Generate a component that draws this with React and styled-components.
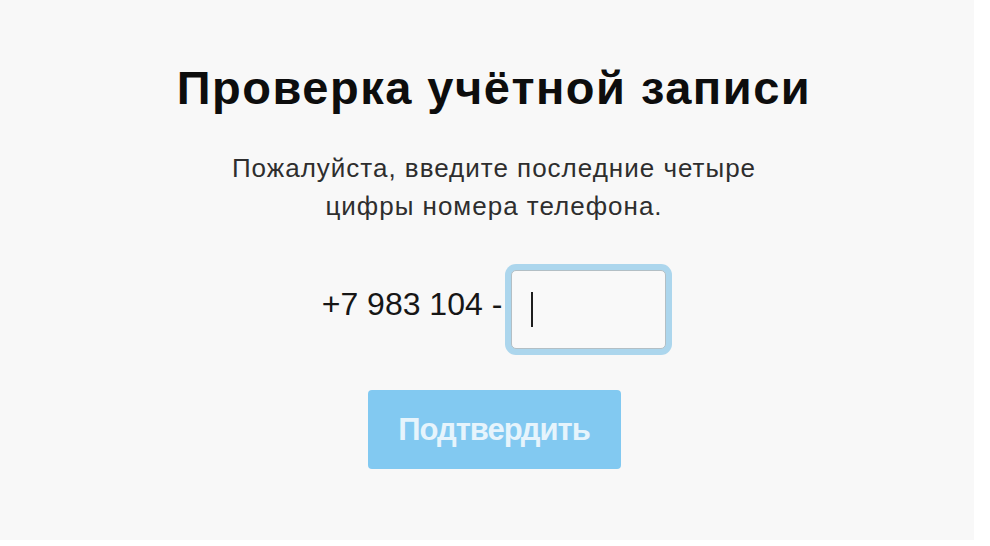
import styled, { createGlobalStyle } from "styled-components";

const GlobalStyle = createGlobalStyle`
  html, body {
    margin: 0;
    padding: 0;
    background: #ffffff;
  }
  body {
    font-family: "Liberation Sans", Arial, sans-serif;
  }
`;

const App = () => {
  return (
    <>
      <GlobalStyle />
      <Page>
        <Card>
          <Title>Проверка учётной записи</Title>
          <Description>
            Пожалуйста, введите последние четыре
            <br />
            цифры номера телефона.
          </Description>
          <PhoneRow>
            <Prefix>+7 983 104 -</Prefix>
            <CodeInput>
              <Caret />
            </CodeInput>
          </PhoneRow>
          <Submit disabled>Подтвердить</Submit>
        </Card>
      </Page>
    </>
  );
};

const Page = styled.div`
  width: 990px;
  height: 546px;
  box-sizing: border-box;
  padding: 0 16px 6px 0;
  background: #ffffff;
`;

const Card = styled.div`
  height: 100%;
  background: #f8f8f8;
  display: flex;
  flex-direction: column;
  align-items: center;
  padding: 60px 0 0 14px;
  box-sizing: border-box;
`;

const Title = styled.h1`
  margin: 0;
  font-size: 47px;
  font-weight: bold;
  letter-spacing: 1.5px;
  color: #0d0d0d;
  line-height: 56px;
`;

const Description = styled.p`
  margin: 33px 0 0;
  font-size: 26px;
  letter-spacing: 1px;
  line-height: 38px;
  color: #2e2e2e;
  text-align: center;
`;

const PhoneRow = styled.div`
  display: flex;
  align-items: center;
  gap: 9px;
  margin-top: 45px;
`;

const Prefix = styled.span`
  font-size: 32px;
  color: #161616;
  margin-bottom: 10px;
`;

const CodeInput = styled.div`
  width: 155px;
  height: 79px;
  box-sizing: border-box;
  border: 1px solid #b3bfc5;
  border-radius: 5px;
  background: #f9f9f9;
  box-shadow: 0 0 0 6px #acd6ed;
  display: flex;
  align-items: center;
  padding-left: 19px;
`;

const Caret = styled.span`
  width: 2px;
  height: 35px;
  background: #1e1e1e;
`;

const Submit = styled.button`
  margin-top: 41px;
  width: 253px;
  height: 79px;
  border: none;
  border-radius: 4px;
  background: #82c9f1;
  color: #e6f4fc;
  font-family: "Liberation Sans", Arial, sans-serif;
  font-size: 31px;
  font-weight: bold;
  letter-spacing: -1px;
  cursor: default;
`;

export default App;
